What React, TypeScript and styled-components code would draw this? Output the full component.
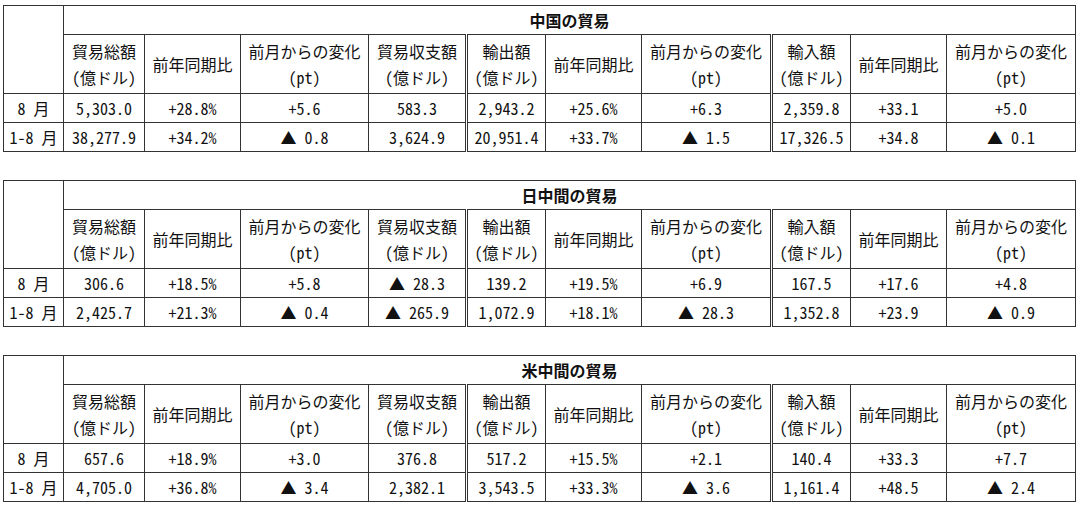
import React from 'react'
import styled, { createGlobalStyle } from 'styled-components'

type TradeTable = {
  title: string;
  rows: { label: string; values: string[] }[];
}

const colWidths = [60, 81, 96, 128, 98, 79, 96, 130, 79, 96, 129];

const headers: string[][] = [
  ['貿易総額', '(億ドル)'],
  ['前年同期比'],
  ['前月からの変化', '(pt)'],
  ['貿易収支額', '(億ドル)'],
  ['輸出額', '(億ドル)'],
  ['前年同期比'],
  ['前月からの変化', '(pt)'],
  ['輸入額', '(億ドル)'],
  ['前年同期比'],
  ['前月からの変化', '(pt)'],
];

// 輸出額・輸入額の前は二重線
const doubleBefore = [4, 7];

const tables: TradeTable[] = [
  {
    title: '中国の貿易',
    rows: [
      { label: '8 月', values: ['5,303.0', '+28.8%', '+5.6', '583.3', '2,943.2', '+25.6%', '+6.3', '2,359.8', '+33.1', '+5.0'] },
      { label: '1-8 月', values: ['38,277.9', '+34.2%', '▲ 0.8', '3,624.9', '20,951.4', '+33.7%', '▲ 1.5', '17,326.5', '+34.8', '▲ 0.1'] },
    ],
  },
  {
    title: '日中間の貿易',
    rows: [
      { label: '8 月', values: ['306.6', '+18.5%', '+5.8', '▲ 28.3', '139.2', '+19.5%', '+6.9', '167.5', '+17.6', '+4.8'] },
      { label: '1-8 月', values: ['2,425.7', '+21.3%', '▲ 0.4', '▲ 265.9', '1,072.9', '+18.1%', '▲ 28.3', '1,352.8', '+23.9', '▲ 0.9'] },
    ],
  },
  {
    title: '米中間の貿易',
    rows: [
      { label: '8 月', values: ['657.6', '+18.9%', '+3.0', '376.8', '517.2', '+15.5%', '+2.1', '140.4', '+33.3', '+7.7'] },
      { label: '1-8 月', values: ['4,705.0', '+36.8%', '▲ 3.4', '2,382.1', '3,543.5', '+33.3%', '▲ 3.6', '1,161.4', '+48.5', '▲ 2.4'] },
    ],
  },
];

const GlobalStyle = createGlobalStyle`
  body {
    margin: 0;
    background: #fff;
    font-family: "Noto Sans CJK JP", "Noto Sans", sans-serif;
  }
`;

const App: React.FC = () => {
  return (
    <>
      <GlobalStyle />
      <Page>
        {tables.map(t => (
          <Table key={t.title}>
            <colgroup>
              {colWidths.map((w, i) => <col key={i} style={{ width: w }} />)}
            </colgroup>
            <tbody>
              <tr className='title-row'>
                <Cell rowSpan={2} />
                <TitleCell colSpan={10}>{t.title}</TitleCell>
              </tr>
              <tr className='head-row'>
                {headers.map((h, i) => (
                  <HeadCell key={i} $double={doubleBefore.includes(i)}>
                    {h.map(line => <div key={line}>{line}</div>)}
                  </HeadCell>
                ))}
              </tr>
              {t.rows.map(r => (
                <tr className='data-row' key={r.label}>
                  <Cell>{r.label}</Cell>
                  {r.values.map((v, i) => (
                    <Cell key={i} $double={doubleBefore.includes(i)}>{v}</Cell>
                  ))}
                </tr>
              ))}
            </tbody>
          </Table>
        ))}
      </Page>
    </>
  )
}

const Page = styled.div`
  display: flex;
  flex-direction: column;
  gap: 28px;
  padding: 5px 0 0 3px;
`;

const Table = styled.table`
  width: 1072px;
  table-layout: fixed;
  border-collapse: collapse;
  color: #111;
  font-size: 16px;
  font-feature-settings: "hwid" 1;

  .title-row { height: 29px; }
  .head-row { height: 59px; }
  .data-row { height: 29px; }
`;

const Cell = styled.td<{ $double?: boolean }>`
  border: 1px solid #333;
  ${p => p.$double && 'border-left: 3px double #333;'}
  padding: 0;
  text-align: center;
  vertical-align: middle;
  line-height: 20px;
  white-space: nowrap;
`;

const TitleCell = styled(Cell)`
  font-weight: bold;
`;

const HeadCell = styled(Cell)`
  line-height: 26px;
`;

export default App
